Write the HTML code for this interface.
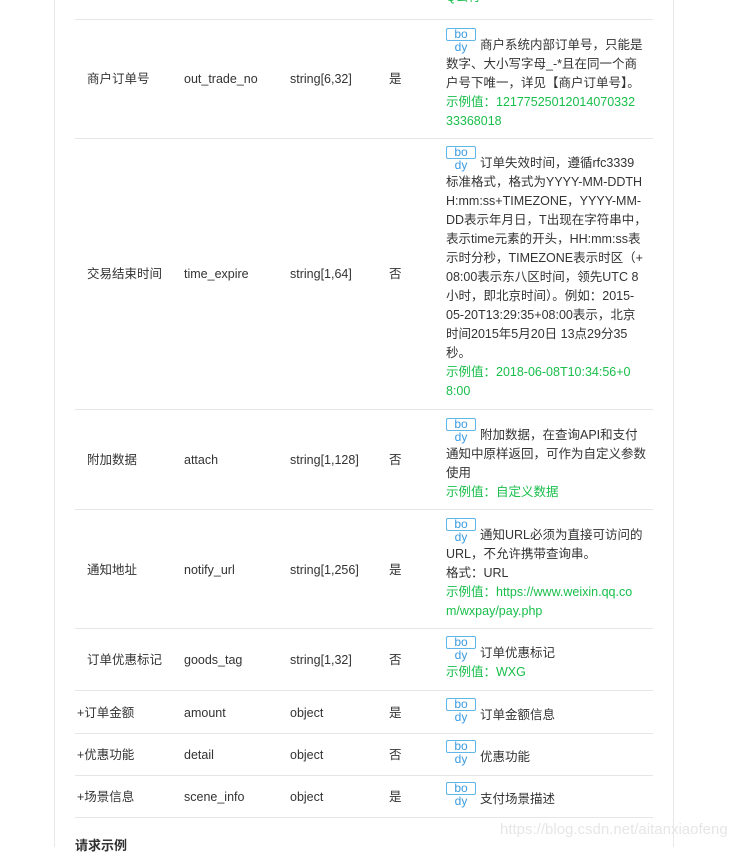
<!DOCTYPE html>
<html><head><meta charset="utf-8"><style>
*{margin:0;padding:0}
body{width:750px;height:847px;overflow:hidden;background:#fff;position:relative;font-family:"Liberation Sans","Noto Sans CJK SC",sans-serif;font-size:12.5px;color:#333}
.vl{position:absolute;top:0;bottom:0;width:1px;background:#e8e8e8}
.hl{position:absolute;left:75px;width:578px;height:1px;background:#e6e6e6}
.t{position:absolute;white-space:nowrap;line-height:19px;margin-top:2px}
.d{position:absolute;left:446px;width:200px;line-height:19px;text-indent:34px;white-space:nowrap;margin-top:2px}
.g{color:#19be4b}
.b{position:absolute;left:446px;width:28px;height:11px;border:1px solid #5fb6e8;border-radius:2px;color:#3a9be0;font-size:12px;line-height:11px;text-align:center}
.b span{position:absolute;left:0;right:0;top:12px;line-height:13px}
.p{left:77px}
</style></head><body>
<div class="vl" style="left:54px"></div>
<div class="vl" style="left:673px"></div>
<div class="t g" style="left:446px;top:-14px">Q公行</div>
<div class="hl" style="top:19px"></div>
<div class="hl" style="top:138px"></div>
<div class="hl" style="top:409px"></div>
<div class="hl" style="top:509px"></div>
<div class="hl" style="top:628px"></div>
<div class="hl" style="top:690px"></div>
<div class="hl" style="top:733px"></div>
<div class="hl" style="top:775px"></div>
<div class="hl" style="top:817px"></div>

<div class="t" style="left:87px;top:68px">商户订单号</div><div class="t" style="left:184px;top:68px">out_trade_no</div><div class="t" style="left:290px;top:68px">string[6,32]</div><div class="t" style="left:389px;top:68px">是</div>
<div class="b" style="top:28px">bo<span>dy</span></div>
<div class="d" style="top:34px">商户系统内部订单号，只能是<br>数字、大小写字母_-*且在同一个商<br>户号下唯一，详见【商户订单号】。<br><span class="g">示例值：12177525012014070332</span><br><span class="g">33368018</span></div>

<div class="t" style="left:87px;top:263px">交易结束时间</div><div class="t" style="left:184px;top:263px">time_expire</div><div class="t" style="left:290px;top:263px">string[1,64]</div><div class="t" style="left:389px;top:263px">否</div>
<div class="b" style="top:146px">bo<span>dy</span></div>
<div class="d" style="top:152px">订单失效时间，遵循rfc3339<br>标准格式，格式为YYYY-MM-DDTH<br>H:mm:ss+TIMEZONE，YYYY-MM-<br>DD表示年月日，T出现在字符串中，<br>表示time元素的开头，HH:mm:ss表<br>示时分秒，TIMEZONE表示时区（+<br>08:00表示东八区时间，领先UTC 8<br>小时，即北京时间）。例如：2015-<br>05-20T13:29:35+08:00表示，北京<br>时间2015年5月20日 13点29分35<br>秒。<br><span class="g">示例值：2018-06-08T10:34:56+0</span><br><span class="g">8:00</span></div>

<div class="t" style="left:87px;top:449px">附加数据</div><div class="t" style="left:184px;top:449px">attach</div><div class="t" style="left:290px;top:449px">string[1,128]</div><div class="t" style="left:389px;top:449px">否</div>
<div class="b" style="top:418px">bo<span>dy</span></div>
<div class="d" style="top:424px">附加数据，在查询API和支付<br>通知中原样返回，可作为自定义参数<br>使用<br><span class="g">示例值：自定义数据</span></div>

<div class="t" style="left:87px;top:559px">通知地址</div><div class="t" style="left:184px;top:559px">notify_url</div><div class="t" style="left:290px;top:559px">string[1,256]</div><div class="t" style="left:389px;top:559px">是</div>
<div class="b" style="top:518px">bo<span>dy</span></div>
<div class="d" style="top:524px">通知URL必须为直接可访问的<br>URL，不允许携带查询串。<br>格式：URL<br><span class="g">示例值：https://www.weixin.qq.co</span><br><span class="g">m/wxpay/pay.php</span></div>

<div class="t" style="left:87px;top:649px">订单优惠标记</div><div class="t" style="left:184px;top:649px">goods_tag</div><div class="t" style="left:290px;top:649px">string[1,32]</div><div class="t" style="left:389px;top:649px">否</div>
<div class="b" style="top:636px">bo<span>dy</span></div>
<div class="d" style="top:642px">订单优惠标记<br><span class="g">示例值：WXG</span></div>

<div class="t p" style="top:702px">+订单金额</div><div class="t" style="left:184px;top:702px">amount</div><div class="t" style="left:290px;top:702px">object</div><div class="t" style="left:389px;top:702px">是</div>
<div class="b" style="top:698px">bo<span>dy</span></div><div class="d" style="top:704px">订单金额信息</div>

<div class="t p" style="top:744px">+优惠功能</div><div class="t" style="left:184px;top:744px">detail</div><div class="t" style="left:290px;top:744px">object</div><div class="t" style="left:389px;top:744px">否</div>
<div class="b" style="top:740px">bo<span>dy</span></div><div class="d" style="top:746px">优惠功能</div>

<div class="t p" style="top:786px">+场景信息</div><div class="t" style="left:184px;top:786px">scene_info</div><div class="t" style="left:290px;top:786px">object</div><div class="t" style="left:389px;top:786px">是</div>
<div class="b" style="top:782px">bo<span>dy</span></div><div class="d" style="top:788px">支付场景描述</div>

<div class="t" style="left:75px;top:834px;font-weight:bold;font-size:13px">请求示例</div>
<div class="t" style="left:500px;top:818px;font-size:15px;color:#e6e6e6">https://blog.csdn.net/aitanxiaofeng</div>
</body></html>
